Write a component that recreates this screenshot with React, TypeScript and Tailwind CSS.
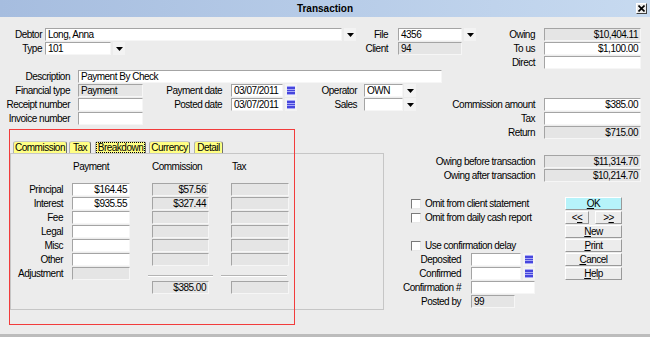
import React from 'react';

type P = { className?: string; children?: React.ReactNode };

const sunken = 'border border-t-[#a4a4a4] border-l-[#a4a4a4] border-b-[#f6f6f6] border-r-[#f6f6f6]';

const Lbl: React.FC<P> = ({ className = '', children }) => (
  <div className={`shrink-0 text-right whitespace-nowrap ${className}`}>{children}</div>
);

const Field: React.FC<P & { gray?: boolean; right?: boolean }> = ({ className = '', gray, right, children }) => (
  <div
    className={`shrink-0 h-[13px] ${sunken} px-[2px] leading-[11px] whitespace-nowrap overflow-hidden ${
      gray ? 'bg-[#e5e5e5]' : 'bg-white'
    } ${right ? 'text-right' : ''} ${className}`}
  >
    {children}
  </div>
);

const Row: React.FC<P> = ({ className = '', children }) => (
  <div className={`flex h-[13px] mb-[1px] items-center leading-[13px] ${className}`}>{children}</div>
);

const Arrow: React.FC<P> = ({ className = '' }) => (
  <div className={`shrink-0 h-[13px] w-[12px] flex items-center justify-center bg-[#f3f3f3] ${className}`}>
    <svg width="7" height="4" viewBox="0 0 7 4">
      <path d="M0 0h7L3.5 4z" fill="#000" />
    </svg>
  </div>
);

const Cal: React.FC<P> = ({ className = '' }) => (
  <div className={`shrink-0 h-[13px] w-[12px] flex items-center justify-center bg-[#f3f3f3] ${className}`}>
    <svg width="8" height="9" viewBox="0 0 8 9">
      <rect width="8" height="9" fill="#a8a8f8" />
      <rect y="1" width="8" height="2" fill="#4646dc" />
      <rect y="4" width="8" height="1" fill="#4646dc" />
      <rect y="6" width="8" height="2" fill="#4646dc" />
    </svg>
  </div>
);

const Check: React.FC<{ label: string }> = ({ label }) => (
  <Row>
    <div className="ml-[27px] w-[10px] h-[10px] bg-white border border-t-[#7a7a7a] border-l-[#7a7a7a] border-b-[#e8e8e8] border-r-[#e8e8e8]" />
    <span className="ml-[4px]">{label}</span>
  </Row>
);

const Btn: React.FC<P & { cyan?: boolean }> = ({ className = '', cyan, children }) => (
  <div
    className={`h-[13px] mb-[1px] border border-t-white border-l-white border-b-[#999] border-r-[#999] text-center leading-[11px] ${
      cyan ? 'bg-[#b6f3fa]' : 'bg-[#ececec]'
    } ${className}`}
  >
    {children}
  </div>
);

const Tab: React.FC<P & { active?: boolean }> = ({ className = '', active, children }) => (
  <div
    className={`shrink-0 h-[12px] bg-[#ffff84] border border-b-0 border-l-[#b0b0b0] border-t-[#c8c8c8] border-r-[#707070] rounded-t-[3px] flex items-center justify-center leading-[10px] ${className}`}
  >
    {active ? <span className="border border-dotted border-black px-[1px] leading-[9px]">{children}</span> : children}
  </div>
);

const Sep: React.FC<P> = ({ className = '' }) => (
  <div className={`shrink-0 self-start mt-[8px] h-[2px] border-t border-t-[#b4b4b4] border-b border-b-white ${className}`} />
);

export default function App() {
  return (
    <div className="w-[650px] h-[337px] overflow-hidden relative flex flex-col bg-[#ececec] text-black text-[10px] tracking-[-0.5px] font-['Liberation_Sans',Arial,sans-serif]">
      {/* title bar */}
      <div className="h-[17px] shrink-0 flex items-center bg-gradient-to-r from-[#a6bddf] to-[#c7daf0]">
        <div className="w-[14px]" />
        <div className="flex-1 text-center font-bold tracking-normal">Transaction</div>
        <div className="w-[11px] h-[11px] mr-[3px] border border-t-white border-l-white border-b-[#404040] border-r-[#404040] bg-[#ececec] flex items-center justify-center">
          <svg width="7" height="7" viewBox="0 0 7 7">
            <path d="M0.5 0.5l6 6M6.5 0.5l-6 6" stroke="#000" strokeWidth="1.6" />
          </svg>
        </div>
      </div>

      <div className="flex-1 pt-[11px] overflow-hidden">
        <Row>
          <Lbl className="w-[42px]">Debtor</Lbl>
          <Field className="ml-[3px] w-[297px]">Long, Anna</Field>
          <Arrow className="ml-[2px]" />
          <Lbl className="w-[32px]">File</Lbl>
          <Field className="ml-[10px] w-[64px]">4356</Field>
          <Arrow className="ml-[2px]" />
          <Lbl className="w-[59px]">Owing</Lbl>
          <Field gray right className="ml-[9px] w-[97px]">$10,404.11</Field>
        </Row>
        <Row>
          <Lbl className="w-[42px]">Type</Lbl>
          <Field className="ml-[3px] w-[66px]">101</Field>
          <Arrow className="ml-[2px]" />
          <Lbl className="w-[263px]">Client</Lbl>
          <Field gray className="ml-[10px] w-[64px]">94</Field>
          <Lbl className="w-[73px]">To us</Lbl>
          <Field right className="ml-[9px] w-[97px]">$1,100.00</Field>
        </Row>
        <Row>
          <Lbl className="w-[535px]">Direct</Lbl>
          <Field className="ml-[9px] w-[97px]" />
        </Row>
        <Row>
          <Lbl className="w-[70px]">Description</Lbl>
          <Field className="ml-[8px] w-[364px]">Payment By Check</Field>
        </Row>
        <Row>
          <Lbl className="w-[70px]">Financial type</Lbl>
          <Field gray className="ml-[8px] w-[65px]">Payment</Field>
          <Lbl className="w-[79px]">Payment date</Lbl>
          <Field className="ml-[9px] w-[52px]">03/07/2011</Field>
          <Cal className="ml-[2px]" />
          <Lbl className="w-[60px]">Operator</Lbl>
          <Field className="ml-[7px] w-[39px]">OWN</Field>
          <Arrow className="ml-[1px]" />
        </Row>
        <Row>
          <Lbl className="w-[70px]">Receipt number</Lbl>
          <Field className="ml-[8px] w-[65px]" />
          <Lbl className="w-[79px]">Posted date</Lbl>
          <Field className="ml-[9px] w-[52px]">03/07/2011</Field>
          <Cal className="ml-[2px]" />
          <Lbl className="w-[60px]">Sales</Lbl>
          <Field className="ml-[7px] w-[39px]" />
          <Arrow className="ml-[1px]" />
          <Lbl className="w-[119px]">Commission amount</Lbl>
          <Field right className="ml-[9px] w-[97px]">$385.00</Field>
        </Row>
        <Row>
          <Lbl className="w-[70px]">Invoice number</Lbl>
          <Field className="ml-[8px] w-[65px]" />
          <Lbl className="w-[392px]">Tax</Lbl>
          <Field className="ml-[9px] w-[97px]" />
        </Row>
        <Row>
          <Lbl className="w-[535px]">Return</Lbl>
          <Field gray right className="ml-[9px] w-[97px]">$715.00</Field>
        </Row>

        <div className="flex">
          {/* tabs + breakdown panel */}
          <div className="w-[384px] shrink-0 pl-[10px]">
            <div className="mt-[1px] pl-[3px] flex items-end h-[12px]">
              <Tab className="w-[54px]">Commission</Tab>
              <Tab className="ml-[2px] w-[22px]">Tax</Tab>
              <Tab active className="ml-[4px] w-[51px] border-l-[#505050] border-t-[#505050] border-r-[#303030]">Breakdown</Tab>
              <Tab className="ml-[3px] w-[41px]">Currency</Tab>
              <Tab className="ml-[4px] w-[29px]">Detail</Tab>
            </div>
            <div className="h-[157px] border border-[#c6c6c6] pt-[6px]">
              <Row>
                <div className="w-[52px] shrink-0" />
                <div className="ml-[9px] w-[58px] pl-[1px]">Payment</div>
                <div className="ml-[22px] w-[57px]">Commission</div>
                <div className="ml-[22px] w-[58px] pl-[1px]">Tax</div>
              </Row>
              <div className="mt-[10px]">
                {[
                  ['Principal', '$164.45', '$57.56'],
                  ['Interest', '$935.55', '$327.44'],
                  ['Fee', '', ''],
                  ['Legal', '', ''],
                  ['Misc', '', ''],
                  ['Other', '', ''],
                ].map(([l, p, c]) => (
                  <Row key={l}>
                    <Lbl className="w-[52px]">{l}</Lbl>
                    <Field right className="ml-[9px] w-[58px]">{p}</Field>
                    <Field gray right className="ml-[22px] w-[57px]">{c}</Field>
                    <Field gray className="ml-[22px] w-[58px]" />
                  </Row>
                ))}
                <Row>
                  <Lbl className="w-[52px]">Adjustment</Lbl>
                  <Field gray className="ml-[9px] w-[58px]" />
                  <Sep className="ml-[18px] w-[65px]" />
                  <Sep className="ml-[8px] w-[66px]" />
                </Row>
                <Row className="mt-[1px]">
                  <div className="w-[119px] shrink-0" />
                  <Field gray right className="ml-[22px] w-[57px]">$385.00</Field>
                  <Field gray className="ml-[22px] w-[58px]" />
                </Row>
              </div>
            </div>
          </div>

          {/* right column */}
          <div className="flex-1 mt-[15px]">
            <Row>
              <Lbl className="w-[151px]">Owing before transaction</Lbl>
              <Field gray right className="ml-[9px] w-[97px]">$11,314.70</Field>
            </Row>
            <Row>
              <Lbl className="w-[151px]">Owing after transaction</Lbl>
              <Field gray right className="ml-[9px] w-[97px]">$10,214.70</Field>
            </Row>
            <div className="flex mt-[15px]">
              <div className="w-[181px] shrink-0">
                <Check label="Omit from client statement" />
                <Check label="Omit from daily cash report" />
                <Row />
                <Check label="Use confirmation delay" />
                <Row>
                  <Lbl className="w-[77px]">Deposited</Lbl>
                  <Field className="ml-[10px] w-[50px]" />
                  <Cal className="ml-[2px]" />
                </Row>
                <Row>
                  <Lbl className="w-[77px]">Confirmed</Lbl>
                  <Field className="ml-[10px] w-[50px]" />
                  <Cal className="ml-[2px]" />
                </Row>
                <Row>
                  <Lbl className="w-[77px]">Confirmation #</Lbl>
                  <Field className="ml-[10px] w-[64px]" />
                </Row>
                <Row>
                  <Lbl className="w-[77px]">Posted by</Lbl>
                  <Field gray className="ml-[10px] w-[44px]">99</Field>
                </Row>
              </div>
              <div className="w-[57px] shrink-0">
                <Btn cyan>
                  <u>O</u>K
                </Btn>
                <div className="flex">
                  <Btn className="w-[24px]">
                    &lt;<u>&lt;</u>
                  </Btn>
                  <Btn className="ml-[6px] w-[27px]">
                    &gt;<u>&gt;</u>
                  </Btn>
                </div>
                <Btn>
                  <u>N</u>ew
                </Btn>
                <Btn>
                  <u>P</u>rint
                </Btn>
                <Btn>
                  <u>C</u>ancel
                </Btn>
                <Btn>
                  <u>H</u>elp
                </Btn>
              </div>
            </div>
          </div>
        </div>
      </div>

      <div className="h-[3px] shrink-0 bg-[#bcbcbc]" />

      {/* red annotation frame */}
      <div className="absolute left-[9px] top-[129px] w-[286px] h-[196px] border border-[#f23c3c] pointer-events-none" />
    </div>
  );
}
